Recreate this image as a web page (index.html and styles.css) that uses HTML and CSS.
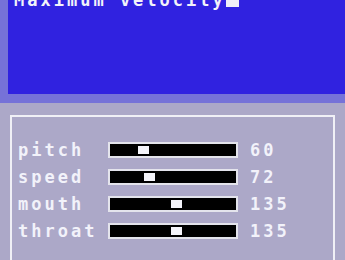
FILE: index.html
```html
<!DOCTYPE html>
<html>
<head>
<meta charset="utf-8">
<link rel="stylesheet" href="styles.css">
</head>
<body>
<div class="screen">
  <div class="display">
    <div class="line">Maximum velocity<span class="cursor"></span></div>
  </div>
</div>
<div class="frame">
  <div class="row"><span class="label">pitch</span><div class="track"><div class="thumb" style="left:28px"></div></div><span class="value">60</span></div>
  <div class="row"><span class="label">speed</span><div class="track"><div class="thumb" style="left:34px"></div></div><span class="value">72</span></div>
  <div class="row"><span class="label">mouth</span><div class="track"><div class="thumb" style="left:61px"></div></div><span class="value">135</span></div>
  <div class="row"><span class="label">throat</span><div class="track"><div class="thumb" style="left:61px"></div></div><span class="value">135</span></div>
</div>
</body>
</html>
```
FILE: styles.css
```css
html, body {
  margin: 0;
  height: 100%;
  overflow: hidden;
}
body {
  background: #aca8c8;
  font-family: "DejaVu Sans Mono", "Liberation Mono", monospace;
  font-weight: bold;
  font-size: 17px;
  line-height: 16px;
  letter-spacing: 3px;
  color: #f2f2fa;
}
.screen {
  background: #7672d8;
  padding: 0 0 9px 8px;
}
.display {
  background: #3022e0;
  height: 94px;
  overflow: hidden;
  padding-left: 6px;
}
.line {
  margin-top: -8px;
  height: 16px;
  white-space: nowrap;
}
.cursor {
  display: inline-block;
  width: 13px;
  height: 14px;
  background: #f0f0f8;
  vertical-align: -1px;
}
.frame {
  margin: 12px 10px 0 10px;
  border: 2px solid #f0f0f6;
  padding: 25px 0 30px 6px;
  display: flex;
  flex-direction: column;
  gap: 11px;
}
.row {
  display: flex;
  align-items: center;
  height: 16px;
}
.label {
  width: 90px;
  flex: none;
}
.track {
  flex: none;
  width: 126px;
  height: 12px;
  border: 2px solid #e4e4ec;
  background: #000;
  position: relative;
}
.thumb {
  position: absolute;
  top: 2px;
  width: 11px;
  height: 8px;
  background: #f4f4fa;
}
.value {
  margin-left: 12px;
}
```
